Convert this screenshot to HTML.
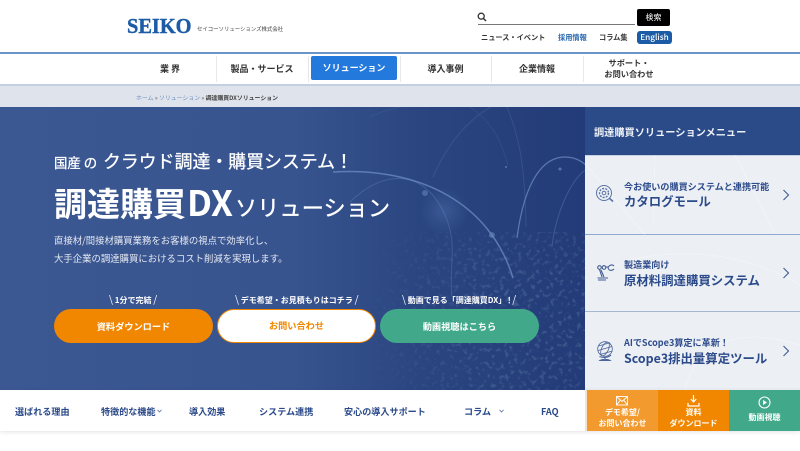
<!DOCTYPE html>
<html lang="ja"><head><meta charset="utf-8"><title>調達購買DXソリューション</title>
<style>
*{box-sizing:border-box;margin:0;padding:0}
html,body{width:800px;height:451px;overflow:hidden;background:#fff}
body{position:relative;font-family:"Noto Sans CJK JP","Liberation Sans",sans-serif;color:#222}
.a{position:absolute;white-space:nowrap}
.c{text-align:center}
.b{font-weight:700}
.sep{position:absolute;top:56px;width:1px;height:26px;background:#e6e8ec}
.nav{font-size:9px;font-weight:700;color:#333;line-height:13px}
.sub{font-size:9.1px;font-weight:700;color:#2f4d8c;line-height:14px;left:624px}
.main{font-size:12.4px;font-weight:700;color:#2b4a8a;line-height:18px;left:624px}
.pill{position:absolute;top:309px;width:159px;height:34px;border-radius:17px;text-align:center;line-height:34px;font-size:9.2px;font-weight:700;color:#fff}
.cap{font-size:8px;font-weight:700;color:#fff;line-height:12px;top:293px}
.cap i{font-style:normal;font-weight:400;font-size:10px}
.bn{font-size:9.1px;font-weight:700;color:#2b4a8a;line-height:14px;top:404px}
.ft{position:absolute;top:390px;height:41px;color:#fff;font-size:8px;font-weight:700;text-align:center;line-height:10.5px}
.line{position:absolute;left:585px;width:215px;height:1px;background:#a9b8d2}
</style></head><body>

<div class="a b" style="left:127px;top:15px;font-family:'Liberation Serif',serif;font-size:21px;line-height:22px;color:#1c5ba6;transform-origin:0 50%;transform:scaleX(.97);-webkit-text-stroke:.4px #1c5ba6">SEIKO</div>
<div class="a" style="left:197px;top:24px;font-size:5.4px;line-height:10px;color:#444">セイコーソリューションズ株式会社</div>

<svg class="a" style="left:477px;top:12px" width="10" height="10" viewBox="0 0 10 10"><circle cx="4.2" cy="4.2" r="3" fill="none" stroke="#333" stroke-width="1.3"/><path d="M6.5 6.5L9 9" stroke="#333" stroke-width="1.5"/></svg>
<div class="a" style="left:478px;top:24px;width:157px;height:1px;background:#777"></div>
<div class="a c" style="left:637px;top:9px;width:33px;height:17px;background:#000;border-radius:2px;color:#fff;font-size:8px;line-height:17px">検索</div>
<div class="a b" style="left:481px;top:32px;font-size:7.2px;line-height:12px;color:#333">ニュース・イベント</div>
<div class="a b" style="left:558px;top:32px;font-size:7.2px;line-height:12px;color:#2a69b0">採用情報</div>
<div class="a b" style="left:599px;top:32px;font-size:7.2px;line-height:12px;color:#333">コラム集</div>
<div class="a c" style="left:637px;top:31px;width:35px;height:13px;background:#1c5ba6;border-radius:3px;color:#fff;font-size:8.2px;line-height:13px;font-weight:500">English</div>

<div class="a" style="left:0;top:52px;width:800px;height:2px;background:#6b95c8"></div>
<div class="a" style="left:0;top:84px;width:800px;height:2px;background:#c3d0e4"></div>
<div class="a" style="left:0;top:86px;width:800px;height:21px;background:#dfe3ec"></div>
<div class="sep" style="left:216px"></div><div class="sep" style="left:308px"></div><div class="sep" style="left:400px"></div><div class="sep" style="left:491px"></div><div class="sep" style="left:583px"></div>
<div class="a nav c" style="left:124px;top:62px;width:92px">業 界</div>
<div class="a nav c" style="left:216px;top:62px;width:92px">製品・サービス</div>
<div class="a c b" style="left:311px;top:56px;width:86px;height:24px;background:#2479dc;border-radius:2px;color:#fff;font-size:9px;line-height:24px">ソリューション</div>
<div class="a nav c" style="left:400px;top:62px;width:91px">導入事例</div>
<div class="a nav c" style="left:491px;top:62px;width:92px">企業情報</div>
<div class="a c b" style="left:583px;top:58px;width:92px;font-size:8.2px;line-height:10.5px;color:#333">サポート・<br>お問い合わせ</div>
<div class="a" style="left:136px;top:93px;font-size:5.9px;line-height:9px;color:#6a90bf">ホーム <span style="color:#555">»</span> ソリューション <span style="color:#555">»</span> <span style="color:#444;font-weight:700">調達購買DXソリューション</span></div>

<svg class="a" style="left:0;top:107px" width="585" height="283" viewBox="0 0 585 283">
<defs>
<linearGradient id="g" x1="0" x2="1" y1="0" y2="0"><stop offset="0" stop-color="#3c5892"/><stop offset=".5" stop-color="#38548f"/><stop offset=".72" stop-color="#2a4580"/><stop offset="1" stop-color="#233c79"/></linearGradient>
<radialGradient id="r"><stop offset="0" stop-color="#5478b4" stop-opacity=".4"/><stop offset="1" stop-color="#5478b4" stop-opacity="0"/></radialGradient>
<radialGradient id="mg" gradientUnits="userSpaceOnUse" cx="530" cy="215" r="170"><stop offset=".25" stop-color="#fff"/><stop offset="1" stop-color="#000"/></radialGradient>
<mask id="m" maskUnits="userSpaceOnUse" x="0" y="0" width="585" height="283"><rect width="585" height="283" fill="url(#mg)"/></mask>
<filter id="n" x="0" y="0" width="100%" height="100%"><feTurbulence type="fractalNoise" baseFrequency=".22" numOctaves="2" seed="5"/><feColorMatrix values="0 0 0 0 .42  0 0 0 0 .6  0 0 0 0 .75  0 0 0 5 -2.7"/></filter>
</defs>
<rect width="585" height="283" fill="url(#g)"/>
<g mask="url(#m)"><rect x="360" y="125" width="225" height="158" filter="url(#n)" opacity=".18"/></g>
<circle cx="444" cy="104" r="24" fill="url(#r)"/>
<g fill="none" stroke="#6d8dc2" stroke-opacity=".75">
<path d="M333 65C420 60 490 96 513 171" stroke-width="1.5"/>
<path d="M350 95C380 65 420 60 442 102C460 135 448 160 452 190" stroke-opacity=".35"/>
<path d="M517 131C525 70 545 50 565 50C575 50 582 54 588 60" stroke-width="1.2"/>
<path d="M552 140C555 110 570 70 590 60" stroke-opacity=".35"/>
<path d="M433 70C450 30 480 0 505 -5M505 -5C520 30 525 60 526 120" stroke-opacity=".22"/>
<path d="M370 10C400 -5 450 -8 470 0C500 20 505 50 508 58" stroke-opacity=".15"/>
</g>
<g fill="#6d8dc2"><circle cx="425" cy="86" r="3" opacity=".5"/><circle cx="492" cy="128" r="3" opacity=".5"/><circle cx="506" cy="60" r="1" opacity=".7"/><circle cx="560" cy="62" r="1.5" opacity=".7"/></g>
</svg>

<div class="a" style="left:54px;top:149px;line-height:24px;color:#fff;-webkit-text-stroke:.3px #fff"><span style="display:inline-block;width:49px;font-size:13.4px">国産 の</span><span style="font-size:17.9px">クラウド調達・購買システム！</span></div>
<div class="a b" style="left:54px;top:179px;line-height:46px;color:#fff"><span style="font-size:33px;margin-right:1px">調達購買</span><span style="font-size:35px">DX</span><span style="font-size:22.1px;font-weight:400;-webkit-text-stroke:.35px #fff;letter-spacing:.15px;margin-left:2px">ソリューション</span></div>
<div class="a" style="left:54px;top:234px;font-size:9.4px;line-height:13px;color:#e6eaf3">直接材/間接材購買業務をお客様の視点で効率化し、</div>
<div class="a" style="left:54px;top:252px;font-size:9.4px;line-height:13px;color:#e6eaf3">大手企業の調達購買におけるコスト削減を実現します。</div>

<div class="a cap" style="left:109px"><i>\</i> 1分で完結 <i>/</i></div>
<div class="a cap" style="left:235px"><i>\</i> デモ希望・お見積もりはコチラ <i>/</i></div>
<div class="a cap" style="left:402px"><i>\</i> 動画で見る「調達購買DX」<span style="margin-left:-1px">！</span><i style="margin-left:-1px">/</i></div>
<div class="pill" style="left:54px;background:#f18700">資料ダウンロード</div>
<div class="pill" style="left:217px;background:#fff;border:1.5px solid #f18700;color:#f18700;line-height:31px">お問い合わせ</div>
<div class="pill" style="left:380px;background:#41a98a">動画視聴はこちら</div>

<div class="a" style="left:585px;top:107px;width:215px;height:48px;background:#2a4a88"></div>
<div class="a b" style="left:594px;top:125px;font-size:10.2px;line-height:14px;color:#eef1f7">調達購買ソリューションメニュー</div>
<div class="a" style="left:585px;top:155px;width:215px;height:235px;background:#eceff4"></div>
<div class="line" style="top:155px;background:#c6d0e2"></div>
<div class="line" style="top:234px;background:#8faad2"></div>
<div class="line" style="top:311px"></div>
<svg class="a" style="left:585px;top:155px" width="215" height="235" fill="none" stroke="#fff" stroke-opacity=".3"><path d="M0 8L60 80M70 0L68 70M150 0L190 78M10 120C60 90 150 90 215 130"/><path d="M100 235C110 190 150 170 215 190"/></svg>

<div class="a sub" style="top:179px">今お使いの購買システムと連携可能</div>
<div class="a main" style="top:192px">カタログモール</div>
<div class="a sub" style="top:257px">製造業向け</div>
<div class="a main" style="top:271px">原材料調達購買システム</div>
<div class="a sub" style="top:335px">AIでScope3算定に革新！</div>
<div class="a main" style="top:349px">Scope3排出量算定ツール</div>

<svg class="a" style="left:595px;top:184px" width="20" height="20" viewBox="0 0 20 20" fill="none" stroke="#5a74a6" stroke-width="1"><circle cx="9" cy="9" r="7.5"/><circle cx="9" cy="9" r="4.5" stroke-dasharray="2 1.2" stroke-width="1.4"/><circle cx="9" cy="9" r="1.8"/><path d="M14 14L18 17.5" stroke-width="1.6"/></svg>
<svg class="a" style="left:596px;top:263px" width="20" height="20" viewBox="0 0 20 20" fill="none" stroke="#3f5c94" stroke-width="1.1"><circle cx="3.5" cy="4.5" r="1.8"/><circle cx="8" cy="4.5" r="1.8"/><path d="M9.5 4H12M12 5C13 2 16 1 18 3M12 5C13 8 16 8 18 6M3.5 6.5L6 14M5 7L8 14M1.5 15H12M2 17H10"/></svg>
<svg class="a" style="left:596px;top:341px" width="20" height="21" viewBox="0 0 20 21" fill="none" stroke="#4a659c" stroke-width=".8"><circle cx="9" cy="8" r="7.3"/><ellipse cx="9" cy="8" rx="3.4" ry="7.3" transform="rotate(25 9 8)"/><path d="M2.5 5L14 1.8M2 9.5L16 5.5M4 13.5L16.5 10"/><path d="M15 14C12 17 7 17 3.5 15.5M9 17V18.5M4 19.5C6 18 12 18 14 19.5H4Z" stroke-width="1.1"/></svg>

<svg class="a" style="left:782px;top:189px" width="8" height="12" viewBox="0 0 8 12" fill="none" stroke="#3f5c94" stroke-width="1.1"><path d="M1.5 1L6.5 6L1.5 11"/></svg>
<svg class="a" style="left:782px;top:267px" width="8" height="12" viewBox="0 0 8 12" fill="none" stroke="#3f5c94" stroke-width="1.1"><path d="M1.5 1L6.5 6L1.5 11"/></svg>
<svg class="a" style="left:782px;top:345px" width="8" height="12" viewBox="0 0 8 12" fill="none" stroke="#3f5c94" stroke-width="1.1"><path d="M1.5 1L6.5 6L1.5 11"/></svg>

<div class="a" style="left:0;top:390px;width:800px;height:41px;background:#fff;box-shadow:0 1px 4px rgba(60,70,100,.15)"></div>
<div class="a bn" style="left:15px">選ばれる理由</div>
<div class="a bn" style="left:101px">特徴的な機能</div>
<svg class="a" style="left:157px;top:409px" width="5" height="4" viewBox="0 0 5 4" fill="none" stroke="#5a74a6" stroke-width=".8"><path d="M.5 .8L2.5 3L4.5 .8"/></svg>
<div class="a bn" style="left:189px">導入効果</div>
<div class="a bn" style="left:259px">システム連携</div>
<div class="a bn" style="left:344px">安心の導入サポート</div>
<div class="a bn" style="left:464px">コラム</div>
<svg class="a" style="left:499px;top:409px" width="5" height="4" viewBox="0 0 5 4" fill="none" stroke="#5a74a6" stroke-width=".8"><path d="M.5 .8L2.5 3L4.5 .8"/></svg>
<div class="a bn" style="left:541px">FAQ</div>

<div class="a" style="left:585px;top:390px;width:2px;height:41px;background:#f5e3cf"></div>
<div class="ft" style="left:587px;width:71px;background:#f29a2e;padding-top:18px">デモ希望/<br>お問い合わせ</div>
<div class="ft" style="left:658px;width:71px;background:#f18700;padding-top:18px">資料<br>ダウンロード</div>
<div class="ft" style="left:729px;width:71px;background:#41a98a;padding-top:23px">動画視聴</div>
<svg class="a" style="left:616px;top:396px" width="12" height="10" viewBox="0 0 12 10" fill="none" stroke="#fff" stroke-width=".9"><rect x=".5" y=".5" width="11" height="8.5"/><path d="M.5 .5L6 5.5L11.5 .5M.5 9L4.3 4.2M11.5 9L7.7 4.2"/></svg>
<svg class="a" style="left:687px;top:395px" width="13" height="12" viewBox="0 0 13 12" fill="none" stroke="#fff" stroke-width="1.2"><path d="M6.5 0V6M3.8 4L6.5 7L9.2 4"/><path d="M1 8V11H12V8"/></svg>
<svg class="a" style="left:758px;top:396px" width="13" height="13" viewBox="0 0 13 13"><circle cx="6.5" cy="6.5" r="5.5" fill="none" stroke="#fff" stroke-width="1.1"/><path d="M5 4L9 6.5L5 9Z" fill="#fff"/></svg>
</body></html>
